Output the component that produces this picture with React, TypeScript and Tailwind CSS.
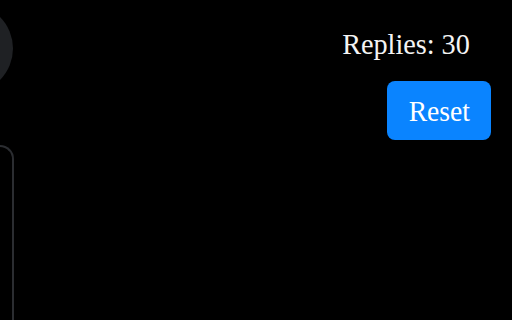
export default function App() {
  return (
    <div className="flex h-[320px] w-full overflow-hidden bg-black text-white" style={{ fontFamily: '"Liberation Serif", serif' }}>
      {/* Left column, mostly off-screen */}
      <div className="-ml-[76px] flex w-[90px] shrink-0 flex-col">
        <div className="mt-[4px] h-[89px] w-[89px] rounded-full bg-[#1f2124]"></div>
        <div className="mt-[52px] flex-1 rounded-t-[14px] border-2 border-b-0 border-[#2b2d31]"></div>
      </div>

      <div className="flex flex-1 flex-col items-end pr-[21px] pt-[26px]">
        <p className="mr-[21px] origin-right scale-x-[0.94] text-[30px] leading-[36px] text-[#f4f4f4]">Replies: 30</p>
        <button className="mt-[19px] h-[59px] w-[104px] rounded-[8px] bg-[#0a84ff] text-white">
          <span className="inline-block scale-x-[0.92] text-[30px] leading-[36px]">Reset</span>
        </button>
      </div>
    </div>
  );
}
